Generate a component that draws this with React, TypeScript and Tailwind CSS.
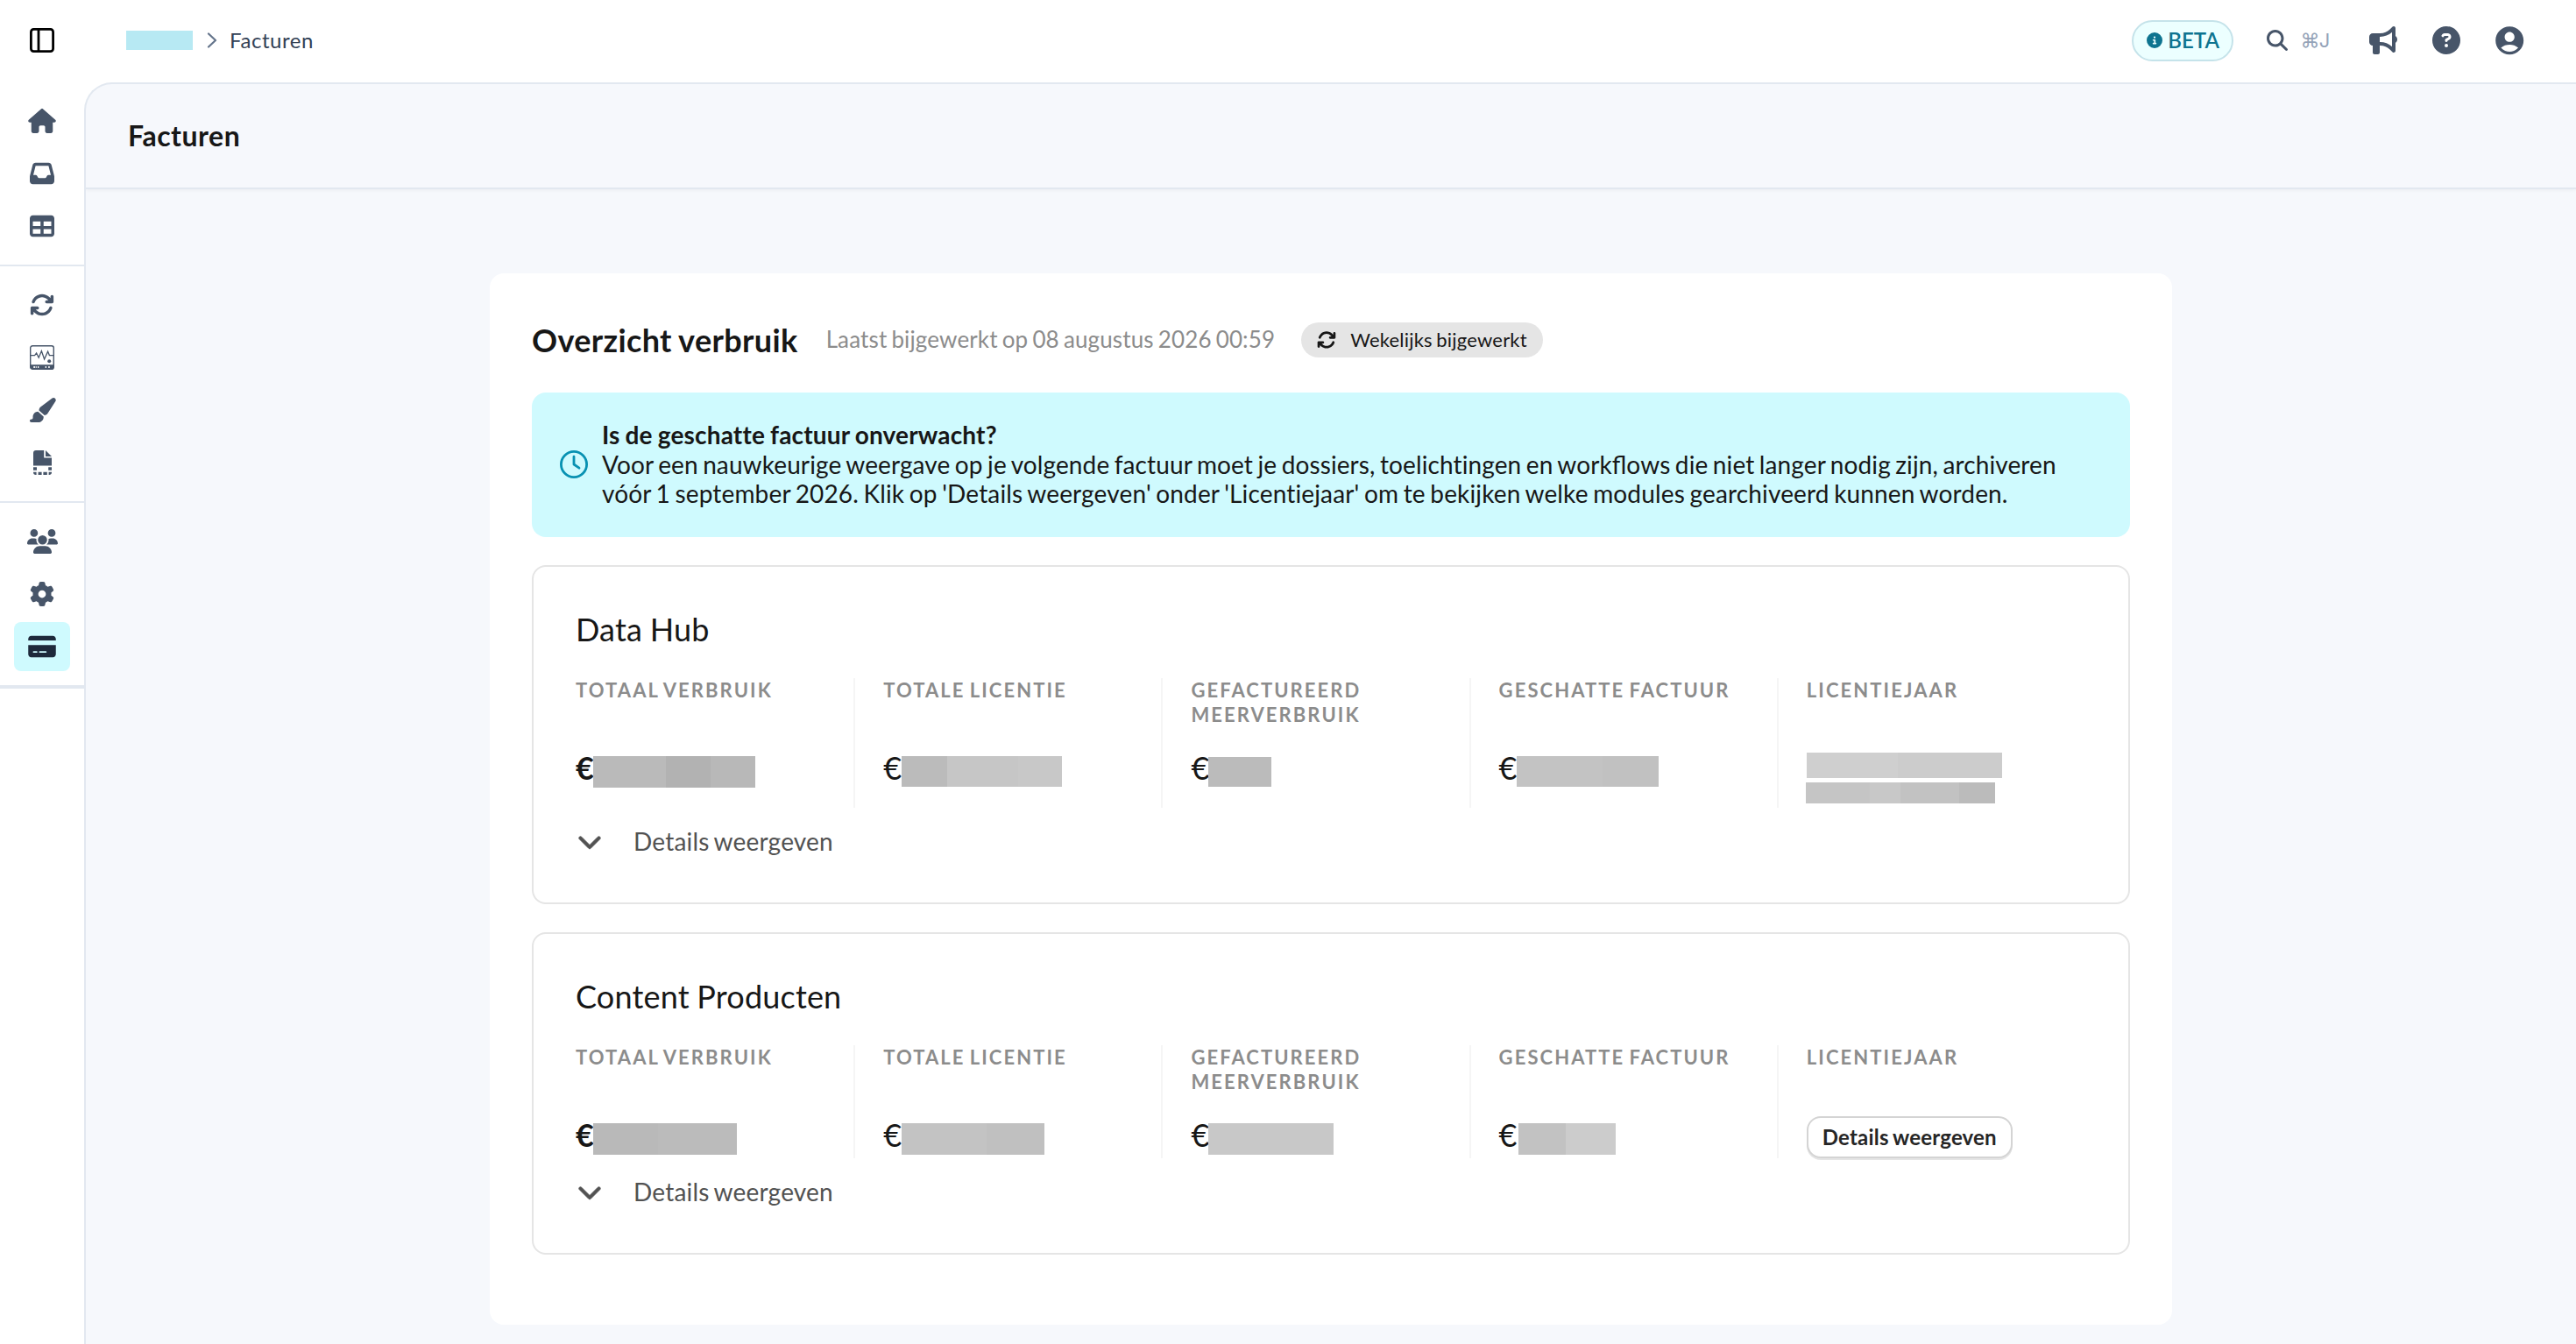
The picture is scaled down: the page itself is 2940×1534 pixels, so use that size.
import type { ReactNode } from 'react'
import clsx from 'clsx'
import {
  FaArrowsRotate,
  FaBullhorn,
  FaChevronDown,
  FaCircleInfo,
  FaCircleQuestion,
  FaCreditCard,
  FaGear,
  FaHouse,
  FaInbox,
  FaMagnifyingGlass,
  FaPaintbrush,
  FaTable,
  FaUsers,
} from 'react-icons/fa6'
import { MdAccountCircle } from 'react-icons/md'

const PanelIcon = () => (
  <svg width="28" height="28" viewBox="0 0 28 28" fill="none" stroke="currentColor" strokeWidth="2.8">
    <rect x="1.4" y="1.4" width="25.2" height="25.2" rx="3" />
    <path d="M10 1.4v25.2" />
  </svg>
)

const MonitorIcon = () => (
  <svg width="28" height="28" viewBox="0 0 28 28" fill="none" stroke="currentColor">
    <rect x="0.7" y="0.7" width="26.6" height="26.6" rx="2.4" strokeWidth="1.4" />
    <path d="M1 11.600h4.600l2-2.600 2.600 5.200 3.200-7.600 3.200 9.400 4-8.800 1.800 4.400H27" strokeWidth="1.3" />
    <circle cx="22.200" cy="18.200" r="2" fill="currentColor" stroke="none" />
    <path d="M.7 22.200h26.600v3.100a2 2 0 0 1-2 2H2.700a2 2 0 0 1-2-2z" fill="currentColor" stroke="none" />
    <path d="M4.300 25h1.600M6.700 25h1M9 25h1.300M17.700 25H19M21.200 25h1.500" stroke="#fff" strokeWidth="1.800" />
  </svg>
)

const FileDashedIcon = () => (
  <svg width="21" height="28" viewBox="0 0 21 28" fill="currentColor">
    <path d="M3 0h9.200v8.600H21v9H0V3a3 3 0 0 1 3-3z" />
    <path d="M14 0l7 7h-7z" />
    <path d="M0 19.200h4v3.600H0zM17.200 19.200H21v3.600h-3.800zM0 24.800h3.600V28H3a3 3 0 0 1-3-3zM5.600 24.800h4V28h-4zM11.400 24.800h4.400V28h-4.400zM17.600 24.800H21a3 3 0 0 1-3 3.200h-.4z" />
  </svg>
)

const ClockIcon = () => (
  <svg width="32" height="32" viewBox="0 0 32 32" fill="none" stroke="currentColor" strokeWidth="2.800" strokeLinecap="round" strokeLinejoin="round">
    <circle cx="16" cy="16" r="14.600" />
    <path d="M16 7.200V16l6 4.200" />
  </svg>
)

const menu: { name: string; icon: ReactNode; active?: boolean }[][] = [
  [
    { name: 'home', icon: <FaHouse className="h-[28px] w-[32px]" /> },
    { name: 'inbox', icon: <FaInbox size={28} /> },
    { name: 'table', icon: <FaTable size={28} /> },
  ],
  [
    { name: 'sync', icon: <FaArrowsRotate size={28} /> },
    { name: 'monitor', icon: <MonitorIcon /> },
    { name: 'brush', icon: <FaPaintbrush className="h-[28px] w-[32px]" /> },
    { name: 'template', icon: <FileDashedIcon /> },
  ],
  [
    { name: 'users', icon: <FaUsers className="h-[28px] w-[35px]" /> },
    { name: 'settings', icon: <FaGear size={28} /> },
    { name: 'billing', icon: <FaCreditCard className="h-[28px] w-[32px]" />, active: true },
  ],
]

const Sidebar = () => (
  <nav className="w-[96px] shrink-0 text-[#475569]">
    {menu.map((group, i) => (
      <div
        key={i}
        className={clsx(
          'flex flex-col items-center gap-1 border-[#e2e8f0] py-4',
          i === menu.length - 1 ? 'border-b-4' : 'border-b-2'
        )}
      >
        {group.map((item) => (
          <a
            key={item.name}
            className={clsx(
              'flex h-14 w-16 items-center justify-center rounded-lg pb-px',
              item.active && 'bg-[#cffafe] text-[#1e293b]'
            )}
          >
            {item.icon}
          </a>
        ))}
      </div>
    ))}
  </nav>
)

const TopBar = () => (
  <header className="flex h-[94px] shrink-0 items-center pb-[2px] pr-[60px]">
    <div className="flex w-[96px] justify-center text-black">
      <PanelIcon />
    </div>
    <div className="ml-[48px] flex items-center">
      <div className="h-[22px] w-[76px] bg-[#b7e9f3]" />
      <svg width="12" height="18" viewBox="0 0 12 18" fill="none" stroke="#64748b" strokeWidth="2.200" strokeLinecap="round" strokeLinejoin="round" className="ml-[16px]">
        <path d="M2 1.500L10 9l-8 7.500" />
      </svg>
      <span className="ml-[14px] text-[24px] leading-[30px] tracking-[0.55px] text-[#334155]">Facturen</span>
    </div>
    <div className="ml-auto flex items-center text-[#475569]">
      <div className="flex h-[47px] w-[116px] items-center justify-center gap-[6px] rounded-full border-2 border-[#c5e3ea] bg-[#ecffff] pl-[2px] text-[#0e7490]">
        <FaCircleInfo size={18} />
        <span className="text-[24px] font-semibold">BETA</span>
      </div>
      <FaMagnifyingGlass size={24} className="ml-[38px]" />
      <span className="ml-[15px] w-[34px] whitespace-nowrap font-['Inter'] text-[22px] tracking-[-0.8px] text-[#94a3b8]">⌘J</span>
      <FaBullhorn size={32} className="ml-[44px]" />
      <FaCircleQuestion size={32} className="ml-[40px]" />
      <MdAccountCircle size={38.4} className="-mr-[3px] ml-[37px]" />
    </div>
  </header>
)

type Block = { w: number; color: string }

// Afgeschermde waarde, opgebouwd uit vlakken met elk een eigen tint
const Redacted = ({ blocks, className }: { blocks: Block[]; className: string }) => (
  <div className={clsx('flex', className)}>
    {blocks.map((b, i) => (
      <div key={i} style={{ width: b.w, background: b.color }} />
    ))}
  </div>
)

const Amount = ({ blocks, bold, className = 'mt-[8px] h-[36px]' }: { blocks: Block[]; bold?: boolean; className?: string }) => (
  <div className="flex text-[36px] leading-[43.2px]">
    <span className={clsx('w-5 shrink-0', bold && 'font-bold')}>€</span>
    <Redacted blocks={blocks} className={className} />
  </div>
)

type Product = { title: string; values: ReactNode[] }

const labels = [
  'Totaal verbruik',
  'Totale licentie',
  'Gefactureerd meerverbruik',
  'Geschatte factuur',
  'Licentiejaar',
]

const products: Product[] = [
  {
    title: 'Data Hub',
    values: [
      <Amount bold blocks={[{ w: 83, color: '#bababa' }, { w: 51, color: '#b2b2b2' }, { w: 51, color: '#b8b8b8' }]} />,
      <Amount className="ml-px mt-[8px] h-[35px]" blocks={[{ w: 52, color: '#bbbbbb' }, { w: 81, color: '#c6c6c6' }, { w: 50, color: '#c8c8c8' }]} />,
      <Amount className="mt-[9px] h-[34px]" blocks={[{ w: 72, color: '#bbbbbb' }]} />,
      <Amount className="mt-[8px] h-[35px]" blocks={[{ w: 98, color: '#c3c3c3' }, { w: 64, color: '#c1c1c1' }]} />,
      <div className="flex h-[67.2px] flex-col gap-[5px] pt-[4px]">
        <Redacted className="h-[29px]" blocks={[{ w: 104, color: '#cfcfcf' }, { w: 119, color: '#cccccc' }]} />
        <Redacted
          className="-ml-px h-[24px]"
          blocks={[{ w: 73, color: '#c5c5c5' }, { w: 35, color: '#c8c8c8' }, { w: 67, color: '#c2c2c2' }, { w: 41, color: '#bbbbbb' }]}
        />
      </div>,
    ],
  },
  {
    title: 'Content Producten',
    values: [
      <Amount bold blocks={[{ w: 74, color: '#b9b9b9' }, { w: 90, color: '#bbbbbb' }]} />,
      <Amount className="ml-px mt-[8px] h-[36px]" blocks={[{ w: 97, color: '#c3c3c3' }, { w: 66, color: '#c0c0c0' }]} />,
      <Amount blocks={[{ w: 143, color: '#c8c8c8' }]} />,
      <Amount className="ml-[2px] mt-[8px] h-[36px]" blocks={[{ w: 54, color: '#c2c2c2' }, { w: 57, color: '#cccccc' }]} />,
      <button className="flex h-12 w-[235px] items-center justify-center rounded-[16px] border-2 border-[#d4d4d4] bg-white text-[24px] font-bold tracking-[0.2px] text-[#262626] shadow-[0_2px_0_#e5e5e5] [word-spacing:-1.3px]">
        Details weergeven
      </button>,
    ],
  },
]

const ProductCard = ({ title, values }: Product) => (
  <section className="mt-8 rounded-[16px] border-2 border-[#e5e5e5] p-12">
    <h3 className="text-[36px] leading-[46.8px] tracking-[0.18px] [word-spacing:-0.8px]">{title}</h3>
    <div className="mt-8 grid grid-cols-5 gap-8">
      {values.map((value, i) => (
        <div
          key={labels[i]}
          className={clsx('flex flex-col gap-6', i < labels.length - 1 && 'border-r-2 border-[#f5f5f5]')}
        >
          <p className="h-[57.2px] text-[22px] font-bold uppercase leading-[28.6px] tracking-[2.08px] text-[#8c8c8c] [word-spacing:-2.3px]">
            {labels[i]}
          </p>
          {value}
        </div>
      ))}
    </div>
    <div className="mt-4 flex h-11 items-center text-[#525252]">
      <FaChevronDown size={28} strokeWidth={16} className="ml-[2px]" />
      <span className="ml-[36px] text-[28px] tracking-[0.2px] [word-spacing:-1.8px]">Details weergeven</span>
    </div>
  </section>
)

const App = () => {
  return (
    <div className="flex h-screen flex-col overflow-hidden bg-white font-['Lato',sans-serif] text-[#171717]">
      <TopBar />
      <div className="flex min-h-0 flex-1">
        <Sidebar />
        <main className="flex flex-1 flex-col overflow-hidden rounded-tl-[32px] border-l-2 border-t-2 border-[#e2e8f0] bg-[#f6f8fc]">
          <div className="flex h-[120px] shrink-0 items-center border-b-2 border-[#e2e8f0] pl-12 shadow-[0_1px_4px_rgba(0,0,0,0.05)]">
            <h1 className="text-[32px] font-bold tracking-[0.5px]">Facturen</h1>
          </div>

          <div className="mx-auto mt-24 h-[1200px] w-[1920px] shrink-0 rounded-[16px] bg-white p-12">
            <div className="flex h-14 items-center">
              <h2 className="text-[36px] font-bold tracking-[0.36px] [word-spacing:-1px]">Overzicht verbruik</h2>
              <p className="ml-8 pb-[2px] text-[26px] tracking-[0.13px] text-[#8c8c8c] [word-spacing:-1.7px]">
                Laatst bijgewerkt op 08 augustus 2026 00:59
              </p>
              <div className="ml-[30px] flex h-10 w-[276px] items-center rounded-full bg-[#e5e5e5] pl-[18px]">
                <FaArrowsRotate size={22} />
                <span className="ml-[16px] whitespace-nowrap pb-px text-[22px] tracking-[0.21px] [word-spacing:-1.4px]">
                  Wekelijks bijgewerkt
                </span>
              </div>
            </div>

            <div className="mt-8 flex items-center gap-4 rounded-[16px] bg-[#cffafe] p-8">
              <span className="shrink-0 text-[#0891b2]">
                <ClockIcon />
              </span>
              <div className="text-[28px] leading-[33.6px]">
                <p className="font-bold tracking-[0.17px] [word-spacing:-1px]">Is de geschatte factuur onverwacht?</p>
                <p className="tracking-[0.11px] [word-spacing:-1.8px]">
                  Voor een nauwkeurige weergave op je volgende factuur moet je dossiers, toelichtingen en work
                  <span className="tracking-normal">fl</span>ows die niet langer nodig zijn, archiveren
                  <br />
                  <span className="tracking-[0.155px]">
                    vóór 1 september 2026. Klik op 'Details weergeven' onder 'Licentiejaar' om te bekijken welke
                    modules gearchiveerd kunnen worden.
                  </span>
                </p>
              </div>
            </div>

            {products.map((product) => (
              <ProductCard key={product.title} {...product} />
            ))}
          </div>
        </main>
      </div>
    </div>
  )
}

export default App
